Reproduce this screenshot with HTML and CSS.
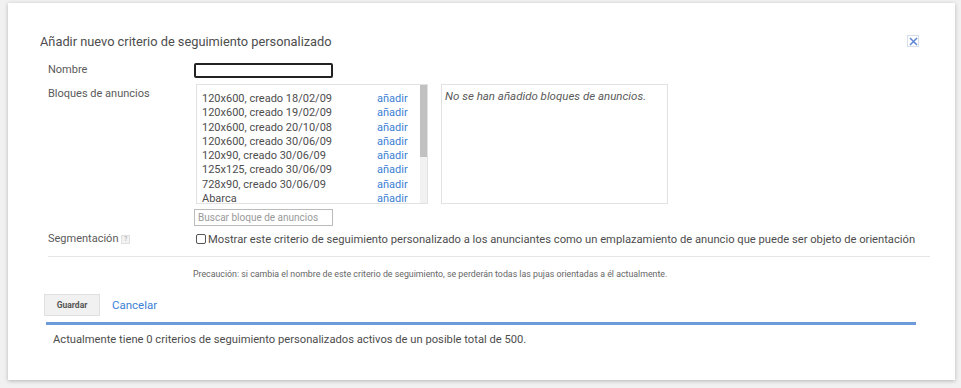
FILE: index.html
```html
<!DOCTYPE html>
<html lang="es">
<head>
    <meta charset="UTF-8">
    <title>Añadir nuevo criterio de seguimiento personalizado</title>
    <link rel="stylesheet" href="styles.css">
</head>
<body>
    <div class="dialog">
        <div class="dialog-head">
            <h2>Añadir nuevo criterio de seguimiento personalizado</h2>
            <span class="close-btn">
                <svg width="9" height="9" viewBox="0 0 9 9"><path d="M1 1L8 8M8 1L1 8" stroke="#5b86d6" stroke-width="1.5"/></svg>
            </span>
        </div>

        <div class="form">
            <label class="field-label">Nombre</label>
            <div class="field"><input type="text" class="name-input"></div>

            <label class="field-label label-blocks">Bloques de anuncios</label>
            <div class="field">
                <div class="blocks">
                    <div class="block-list">
                        <ul>
                            <li><span>120x600, creado 18/02/09</span><a href="#">añadir</a></li>
                            <li><span>120x600, creado 19/02/09</span><a href="#">añadir</a></li>
                            <li><span>120x600, creado 20/10/08</span><a href="#">añadir</a></li>
                            <li><span>120x600, creado 30/06/09</span><a href="#">añadir</a></li>
                            <li><span>120x90, creado 30/06/09</span><a href="#">añadir</a></li>
                            <li><span>125x125, creado 30/06/09</span><a href="#">añadir</a></li>
                            <li><span>728x90, creado 30/06/09</span><a href="#">añadir</a></li>
                            <li><span>Abarca</span><a href="#">añadir</a></li>
                        </ul>
                        <div class="scrollbar"><div class="thumb"></div></div>
                    </div>
                    <div class="selected-list">No se han añadido bloques de anuncios.</div>
                </div>
                <input type="text" class="search-input" placeholder="Buscar bloque de anuncios">
            </div>

            <label class="field-label">Segmentación <span class="help">?</span></label>
            <div class="field check-row">
                <span class="checkbox"></span>
                <span>Mostrar este criterio de seguimiento personalizado a los anunciantes como un emplazamiento de anuncio que puede ser objeto de orientación</span>
            </div>
        </div>

        <hr class="divider">

        <p class="warning">Precaución: si cambia el nombre de este criterio de seguimiento, se perderán todas las pujas orientadas a él actualmente.</p>

        <div class="actions">
            <button class="save-btn">Guardar</button>
            <a href="#" class="cancel-link">Cancelar</a>
        </div>

        <div class="summary">Actualmente tiene 0 criterios de seguimiento personalizados activos de un posible total de 500.</div>
    </div>
</body>
</html>
```

FILE: styles.css
```css
* {
    margin: 0;
    padding: 0;
    box-sizing: border-box;
}

body {
    font-family: Roboto, 'Liberation Sans', Arial, sans-serif;
    background: #f1f1f1;
    color: #4d4d4d;
    height: 388px;
    overflow: hidden;
}

.dialog {
    margin: 3px 6px 0 8px;
    width: 947px;
    height: 377px;
    background: #fff;
    box-shadow: 0 1px 4px rgba(0, 0, 0, 0.25);
    padding: 30px 0 0 32px;
}

.dialog-head {
    display: flex;
    justify-content: space-between;
    align-items: flex-start;
    padding-right: 36px;
}

.dialog-head h2 {
    font-size: 12.8px;
    font-weight: normal;
    color: #4d4d4d;
    line-height: 18px;
}

.close-btn {
    width: 12px;
    height: 12px;
    border: 1px solid #d6deee;
    display: flex;
    align-items: center;
    justify-content: center;
    margin-top: 2px;
}

.form {
    display: grid;
    grid-template-columns: 146px 1fr;
    margin: 12px 0 0 8px;
    row-gap: 6px;
    font-size: 11px;
}

.field-label {
    color: #5a5a5a;
    font-size: 11px;
    line-height: 14px;
}

.label-blocks {
    padding-top: 3px;
}

.name-input {
    display: block;
    width: 139px;
    height: 15px;
    border: 2px solid #222;
    border-radius: 2px;
    outline: none;
}

.blocks {
    display: flex;
    gap: 13px;
    margin-left: 2px;
}

.block-list {
    width: 232px;
    height: 120px;
    border: 1px solid #e2e2e2;
    display: flex;
    overflow: hidden;
}

.block-list ul {
    list-style: none;
    flex: 1;
    padding: 7px 6px 0 5px;
}

.block-list li {
    display: flex;
    justify-content: space-between;
    font-size: 11px;
    line-height: 14.3px;
    color: #4d4d4d;
}

.block-list a {
    color: #3b7fd4;
    text-decoration: none;
    width: 37px;
}

.scrollbar {
    width: 7px;
    background: #f1f1f1;
}

.thumb {
    height: 72px;
    background: #c1c1c1;
}

.selected-list {
    width: 227px;
    height: 120px;
    border: 1px solid #e2e2e2;
    font-style: italic;
    color: #5a5a5a;
    font-size: 11.5px;
    padding: 5px 3px;
    line-height: 12px;
}

.search-input {
    display: block;
    margin-top: 5px;
    width: 139px;
    height: 17px;
    border: 1px solid #bbb;
    font-family: inherit;
    font-size: 10px;
    padding: 0 3px;
    outline: none;
}

.search-input::placeholder {
    color: #999;
}

.help {
    display: inline-block;
    width: 9px;
    height: 9px;
    border: 1px solid #e0e0e0;
    background: #f2f2f2;
    color: #aaa;
    font-size: 7px;
    line-height: 7px;
    text-align: center;
    vertical-align: middle;
}

.check-row {
    display: flex;
    align-items: center;
    gap: 2px;
    font-size: 11.2px;
    color: #4d4d4d;
    margin-left: 3px;
}

.checkbox {
    width: 10px;
    height: 10px;
    border: 1px solid #555;
    border-radius: 2px;
    margin-left: -1px;
}

.divider {
    border: none;
    border-top: 1px solid #e6e6e6;
    margin: 10px 25px 0 8px;
}

.warning {
    font-size: 8.8px;
    color: #666;
    margin: 12px 0 0 153px;
}

.actions {
    display: flex;
    align-items: center;
    gap: 12px;
    margin: 15px 0 0 4px;
}

.save-btn {
    width: 56px;
    height: 22px;
    background: #f1f1f1;
    border: 1px solid #e0e0e0;
    font-family: inherit;
    font-size: 8.5px;
    font-weight: bold;
    color: #555;
}

.cancel-link {
    color: #3b7fd4;
    text-decoration: none;
    font-size: 11.5px;
}

.summary {
    margin: 6px 39px 0 6px;
    border-top: 3px solid #6d9ad8;
    padding: 8px 0 0 7px;
    font-size: 11.2px;
    color: #4d4d4d;
}
```
